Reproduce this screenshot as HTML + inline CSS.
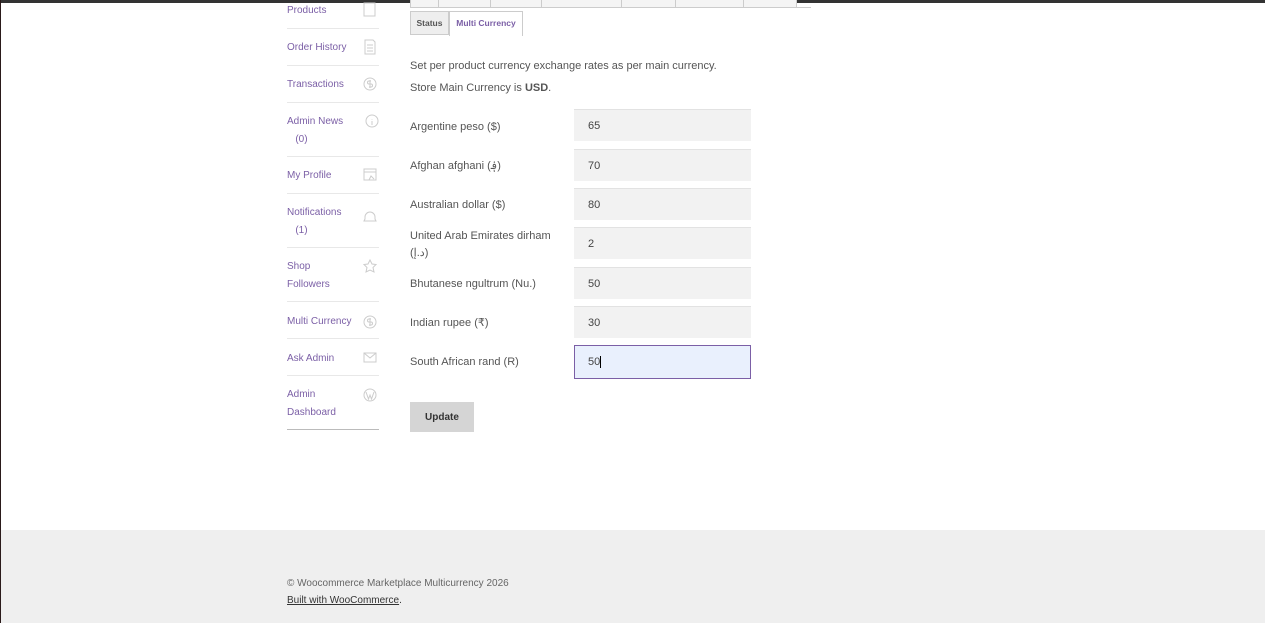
<!DOCTYPE html>
<html><head><meta charset="utf-8"><style>
*{margin:0;padding:0;box-sizing:border-box}
body{width:1265px;height:623px;position:relative;background:#fff;font-family:"Liberation Sans",sans-serif;overflow:hidden}
.a{position:absolute}
.top{left:0;top:0;width:1265px;height:3px;background:#333}
.lb{left:0;top:0;width:1px;height:623px;background:#2a1a1a}
.nav{left:287px;font-size:10px;color:#7b5fa6;line-height:18px}
.sep{left:287px;width:92px;height:1px;background:#e8e8e8}
.lbl{left:410px;font-size:11px;color:#555;line-height:17px}
.inp{left:574px;width:177px;height:32px;background:#f2f2f2;border-top:1px solid #e2e2e2;font-size:11px;color:#444;padding-left:14px;line-height:33px}
.foot{left:0;top:530px;width:1265px;height:93px;background:#efefef}
</style></head><body>
<div class="a foot"></div>
<div class="a top"></div><div class="a lb"></div>

<div class="a" style="left:410px;top:0;width:387px;height:8px;border:1px solid #ccc;border-top:none;background:#f4f4f4"></div>
<div class="a" style="left:438px;top:0;width:1px;height:8px;background:#ccc"></div>
<div class="a" style="left:490px;top:0;width:1px;height:8px;background:#ccc"></div>
<div class="a" style="left:541px;top:0;width:1px;height:8px;background:#ccc"></div>
<div class="a" style="left:621px;top:0;width:1px;height:8px;background:#ccc"></div>
<div class="a" style="left:675px;top:0;width:1px;height:8px;background:#ccc"></div>
<div class="a" style="left:743px;top:0;width:1px;height:8px;background:#ccc"></div>
<div class="a" style="left:797px;top:7px;width:14px;height:1px;background:#ccc"></div>
<div class="a" style="left:410px;top:11px;width:39px;height:24px;background:#eee;border:1px solid #ccc;font-size:8.5px;font-weight:bold;color:#555;text-align:center;line-height:23px">Status</div>
<div class="a" style="left:449px;top:11px;width:74px;height:25px;background:#fff;border:1px solid #ccc;border-bottom:none;font-size:8.5px;font-weight:bold;color:#7b5fa6;text-align:center;line-height:23px">Multi Currency</div>

<div class="a nav" style="top:2px">Products</div>
<div class="a sep" style="top:28px"></div>
<div class="a nav" style="top:39px">Order History</div>
<div class="a sep" style="top:65px"></div>
<div class="a nav" style="top:76px">Transactions</div>
<div class="a sep" style="top:102px"></div>
<div class="a nav" style="top:113px">Admin News<br>&nbsp;&nbsp;&nbsp;(0)</div>
<div class="a sep" style="top:156px"></div>
<div class="a nav" style="top:167px">My Profile</div>
<div class="a sep" style="top:193px"></div>
<div class="a nav" style="top:204px">Notifications<br>&nbsp;&nbsp;&nbsp;(1)</div>
<div class="a sep" style="top:247px"></div>
<div class="a nav" style="top:258px">Shop<br>Followers</div>
<div class="a sep" style="top:301px"></div>
<div class="a nav" style="top:313px">Multi Currency</div>
<div class="a sep" style="top:338px"></div>
<div class="a nav" style="top:350px">Ask Admin</div>
<div class="a sep" style="top:375px"></div>
<div class="a nav" style="top:386px">Admin<br>Dashboard</div>
<div class="a sep" style="top:429px;background:#bbb"></div>

<svg class="a" style="left:360px;top:0" width="20" height="430" fill="none" stroke="#ccc" stroke-width="1">
<rect x="4" y="3" width="11" height="13"/>
<path d="M5 40h8l2 2v12H5z M7 45h6M7 48h6M7 51h6"/>
<circle cx="10" cy="84" r="6"/><path d="M11 81h-2a1.5 1.5 0 0 0 0 3h2a1.5 1.5 0 0 1 0 3h-2M10 80v8"/>
<circle cx="12" cy="121" r="6"/><path d="M12 119v0.5M12 121v4"/>
<rect x="4" y="169" width="12" height="11"/><path d="M4 172h12M9 180l2-4 3 3"/>
<path d="M5 217a5 5 0 0 1 10 0v2l1 2H4l1-2z"/>
<path d="M10 260l2 4 4 .5-3 3 1 4.5-4-2-4 2 1-4.5-3-3 4-.5z"/>
<circle cx="10" cy="322" r="6"/><path d="M11 319h-2a1.5 1.5 0 0 0 0 3h2a1.5 1.5 0 0 1 0 3h-2M10 318v8"/>
<rect x="4" y="353" width="12" height="9"/><path d="M4 353l6 5 6-5"/>
<circle cx="10" cy="395" r="6"/><path d="M6 392l2.5 7 1.5-4 1.5 4 2.5-7"/>
</svg>

<div class="a" style="left:410px;top:60px;font-size:11px;color:#555">Set per product currency exchange rates as per main currency.</div>
<div class="a" style="left:410px;top:82px;font-size:11px;color:#555">Store Main Currency is <b>USD</b>.</div>

<div class="a lbl" style="top:119px">Argentine peso ($)</div>
<div class="a inp" style="top:109px">65</div>
<div class="a lbl" style="top:158px">Afghan afghani (؋)</div>
<div class="a inp" style="top:149px">70</div>
<div class="a lbl" style="top:197px">Australian dollar ($)</div>
<div class="a inp" style="top:188px">80</div>
<div class="a lbl" style="top:228px">United Arab Emirates dirham<br>(د.إ)</div>
<div class="a inp" style="top:227px">2</div>
<div class="a lbl" style="top:276px">Bhutanese ngultrum (Nu.)</div>
<div class="a inp" style="top:267px">50</div>
<div class="a lbl" style="top:315px">Indian rupee (₹)</div>
<div class="a inp" style="top:306px">30</div>
<div class="a lbl" style="top:354px">South African rand (R)</div>
<div class="a inp" style="top:345px;height:34px;background:#e9f0fd;border:1px solid #7b5fa6;padding-left:13px">50<span style="display:inline-block;width:1px;height:12px;background:#000;vertical-align:middle"></span></div>

<div class="a" style="left:410px;top:402px;width:64px;height:30px;background:#d5d5d5;font-size:10px;font-weight:bold;color:#333;text-align:center;line-height:32px">Update</div>

<div class="a" style="left:287px;top:578px;font-size:10px;color:#666">© Woocommerce Marketplace Multicurrency 2026</div>
<div class="a" style="left:287px;top:595px;font-size:10px;color:#333"><span style="text-decoration:underline">Built with WooCommerce</span>.</div>
</body></html>
